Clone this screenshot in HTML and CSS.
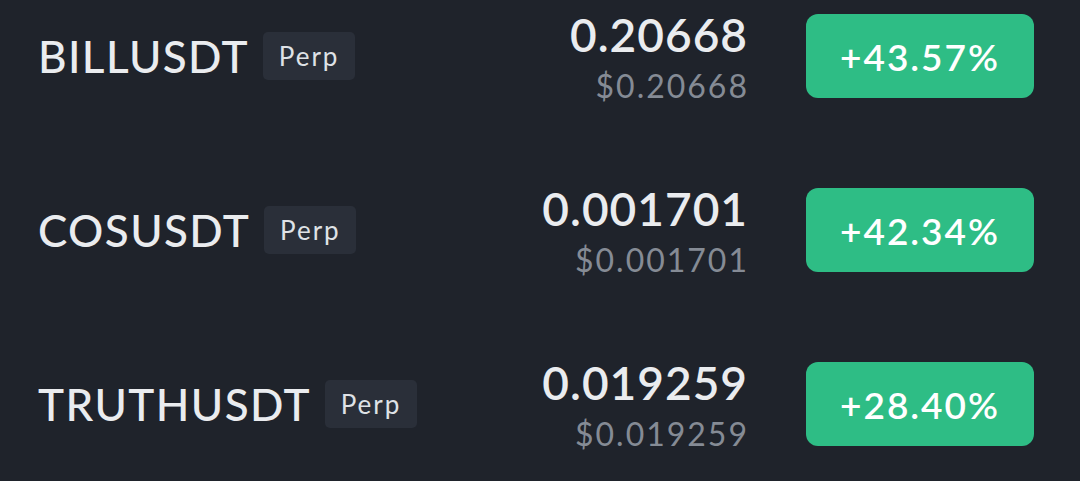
FILE: index.html
```html
<!DOCTYPE html>
<html lang="en">

<head>
    <meta charset="UTF-8">
    <meta name="viewport" content="width=device-width, initial-scale=1.0">
    <title>Top Gainers</title>
    <link rel="stylesheet" href="styles.css">
</head>

<body>
    <div id="lista">
        <div class="linha">
            <div class="par">
                <span class="simbolo">BILLUSDT</span>
                <span class="tag">Perp</span>
            </div>
            <div class="preco">
                <div class="ultimo">0.20668</div>
                <div class="usd">$0.20668</div>
            </div>
            <div class="variacao">+43.57%</div>
        </div>

        <div class="linha">
            <div class="par">
                <span class="simbolo">COSUSDT</span>
                <span class="tag">Perp</span>
            </div>
            <div class="preco">
                <div class="ultimo">0.001701</div>
                <div class="usd">$0.001701</div>
            </div>
            <div class="variacao">+42.34%</div>
        </div>

        <div class="linha">
            <div class="par">
                <span class="simbolo">TRUTHUSDT</span>
                <span class="tag">Perp</span>
            </div>
            <div class="preco">
                <div class="ultimo">0.019259</div>
                <div class="usd">$0.019259</div>
            </div>
            <div class="variacao">+28.40%</div>
        </div>
    </div>
</body>

</html>
```

FILE: styles.css
```css
body {
    font-family: Lato, "Liberation Sans", sans-serif;
    background-color: #1f232b;
    color: #eaecef;
    margin: 0;
    padding: 0;
    overflow: hidden;
}

#lista {
    margin-top: -31px;
    padding: 0 46px 0 38px;
}

.linha {
    height: 174px;
    display: flex;
    flex-direction: row;
    align-items: center;
}

.par {
    display: flex;
    align-items: center;
    gap: 14px;
}

.simbolo {
    font-size: 44px;
    font-weight: 500;
    letter-spacing: 1.4px;
}

.tag {
    width: 92px;
    height: 48px;
    display: flex;
    align-items: center;
    justify-content: center;
    background-color: #2a2f39;
    color: #dfe2e6;
    border-radius: 5px;
    font-size: 26px;
    letter-spacing: 2px;
}

.preco {
    margin-left: auto;
    text-align: right;
}

.ultimo {
    font-size: 46px;
    font-weight: 600;
    line-height: 60px;
    letter-spacing: 1px;
    margin-right: -4px;
}

.usd {
    font-size: 32px;
    line-height: 42px;
    letter-spacing: 2px;
    color: #858b95;
    margin-right: -5px;
}

.variacao {
    width: 228px;
    height: 84px;
    margin-left: 62px;
    display: flex;
    align-items: center;
    justify-content: center;
    background-color: #2ebd85;
    color: #fff;
    border-radius: 12px;
    font-size: 37px;
    font-weight: 600;
    letter-spacing: 2px;
}
```
